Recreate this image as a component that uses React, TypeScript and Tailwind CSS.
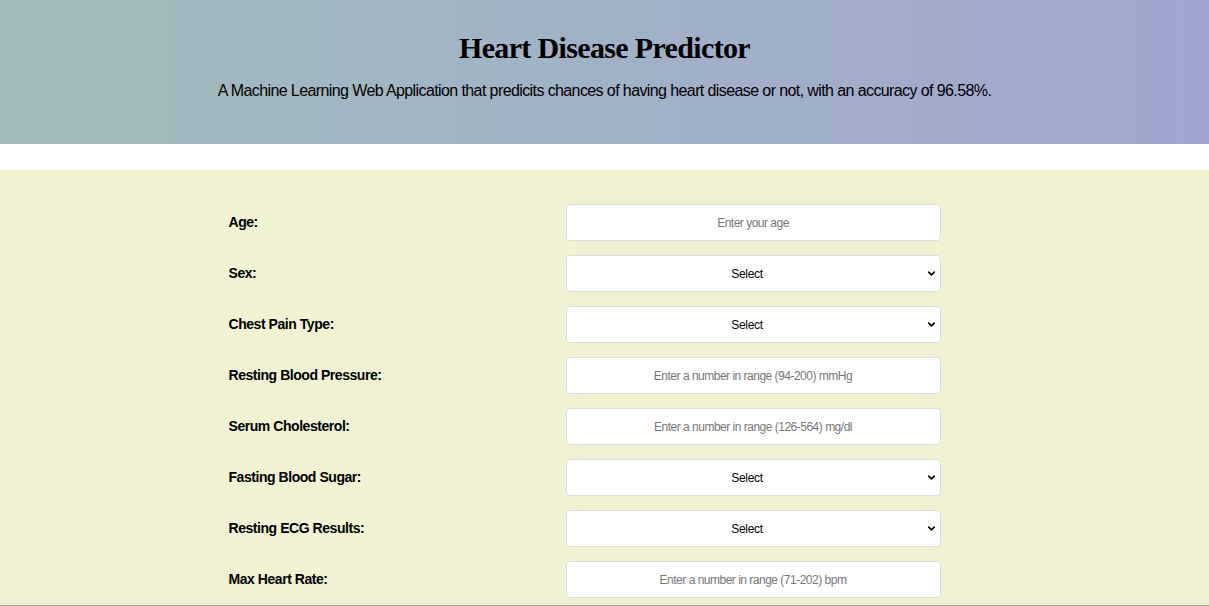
import { ChevronDown } from "lucide-react";

type Field = {
  label: string;
  kind: "input" | "select";
  placeholder?: string;
};

const fields: Field[] = [
  { label: "Age:", kind: "input", placeholder: "Enter your age" },
  { label: "Sex:", kind: "select" },
  { label: "Chest Pain Type:", kind: "select" },
  { label: "Resting Blood Pressure:", kind: "input", placeholder: "Enter a number in range (94-200) mmHg" },
  { label: "Serum Cholesterol:", kind: "input", placeholder: "Enter a number in range (126-564) mg/dl" },
  { label: "Fasting Blood Sugar:", kind: "select" },
  { label: "Resting ECG Results:", kind: "select" },
  { label: "Max Heart Rate:", kind: "input", placeholder: "Enter a number in range (71-202) bpm" },
];

export default function App() {
  return (
    <div className="min-h-screen bg-white font-['Liberation_Sans',Arial,sans-serif]">
      {/* header */}
      <header className="h-[144px] bg-gradient-to-r from-[#a2bdbb] to-[#a0a6d0] flex flex-col items-center pt-[30px]">
        <h1 className="font-['Liberation_Serif','Times_New_Roman',serif] font-bold text-[30px] leading-[36px] tracking-[-0.65px] text-black">
          Heart Disease Predictor
        </h1>
        <p className="mt-[15px] text-[16px] leading-[20px] tracking-[-0.6px] text-black">
          A Machine Learning Web Application that predicits chances of having heart disease or not, with an accuracy of 96.58%.
        </p>
      </header>

      {/* form */}
      <section className="mt-[26px] bg-[#f1f2d3] h-[436px] border-b border-[#a8aa98] overflow-hidden">
        <form className="w-[800px] mx-auto px-6 pt-[34px] flex flex-col gap-[14px]">
          {fields.map((f) => (
            <div key={f.label} className="flex items-center">
              <label className="w-[337px] text-[14px] font-bold tracking-[-0.45px] text-black">{f.label}</label>
              {f.kind === "input" ? (
                <input
                  type="text"
                  placeholder={f.placeholder}
                  className="w-[375px] h-[37px] rounded-[4px] border border-[#dcdcdc] bg-white text-center text-[12px] tracking-[-0.5px] text-black placeholder:text-[#777] outline-none"
                />
              ) : (
                <div className="relative w-[375px] h-[37px]">
                  <select className="w-full h-full appearance-none rounded-[4px] border border-[#dcdcdc] bg-white text-center text-[12px] tracking-[-0.3px] text-black pr-[12px] outline-none">
                    <option>Select</option>
                  </select>
                  <ChevronDown className="absolute right-[4px] top-[13px] w-[11px] h-[11px] text-black pointer-events-none" strokeWidth={3.5} />
                </div>
              )}
            </div>
          ))}
        </form>
      </section>
    </div>
  );
}
